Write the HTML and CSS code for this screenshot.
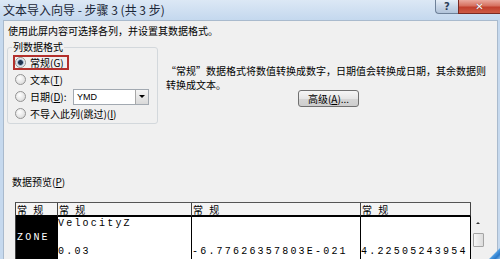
FILE: index.html
```html
<!DOCTYPE html>
<html lang="zh-CN">
<head>
<meta charset="utf-8">
<title>文本导入向导 - 步骤 3 (共 3 步)</title>
<link rel="stylesheet" href="styles.css">
</head>
<body>
<div class="window">
  <div class="titlebar">
    <span class="title">文本导入向导 - 步骤 3 (共 3 步)</span>
    <div class="caption">
      <span class="btn-help">?</span>
      <span class="btn-close">✕</span>
    </div>
  </div>
  <div class="frame">
    <div class="panel">
      <p class="intro">使用此屏内容可选择各列，并设置其数据格式。</p>
      <div class="format-row">
        <fieldset class="group">
          <legend>列数据格式</legend>
          <div class="opt"><span class="hl"><span class="radio on"></span>常规(<u>G</u>)</span></div>
          <div class="opt"><span class="radio"></span>文本(<u>T</u>)</div>
          <div class="opt"><span class="radio"></span><span class="lbl-date">日期(<u>D</u>):</span>
            <div class="combo"><span class="combo-val">YMD</span><span class="drop"></span></div>
          </div>
          <div class="opt"><span class="radio"></span>不导入此列(跳过)(<u>I</u>)</div>
        </fieldset>
        <div class="desc">
          <p class="desc-text">“常规”数据格式将数值转换成数字，日期值会转换成日期，其余数据则<br>转换成文本。</p>
          <div class="adv">高级(<u>A</u>)...</div>
        </div>
      </div>
      <p class="pv-label">数据预览(<u>P</u>)</p>
      <div class="pv">
        <div class="tbl">
          <div class="th">常 规</div>
          <div class="th">常 规</div>
          <div class="th">常 规</div>
          <div class="th">常 规</div>
          <div class="td dark"><span class="ln"></span><span class="ln">ZONE</span><span class="ln"></span></div>
          <div class="td"><span class="ln">VelocityZ</span><span class="ln"></span><span class="ln">0.03</span></div>
          <div class="td"><span class="ln"></span><span class="ln"></span><span class="ln">-6.77626357803E-021</span></div>
          <div class="td"><span class="ln"></span><span class="ln"></span><span class="ln">4.22505243954</span></div>
        </div>
        <div class="scroll">
          <span class="up"></span>
          <span class="thumb"></span>
        </div>
      </div>
    </div>
  </div>
</div>
<div class="corner"></div>
</body>
</html>
```
FILE: styles.css
```css
* { box-sizing: border-box; }
html, body { margin: 0; padding: 0; }
body {
  width: 500px;
  height: 259px;
  overflow: hidden;
  position: relative;
  background: #c6d9ee;
  font-family: "Noto Sans CJK SC", "Noto Sans", sans-serif;
  font-size: 10px;
  color: #000;
}
p { margin: 0; }
u { text-decoration: underline; }

.window { display: flex; flex-direction: column; height: 259px; }

.titlebar {
  height: 20px;
  flex: none;
  display: flex;
  justify-content: space-between;
  align-items: flex-start;
  background: linear-gradient(#dce8f5, #c4d8ee);
}
.title { font-size: 12px; line-height: 20px; padding-left: 3px; color: #1b2636; }
.caption { display: flex; }
.btn-help {
  width: 23px; height: 14px;
  border: 1px solid #6e8199; border-top: none; border-right: none;
  border-radius: 0 0 0 4px;
  background: linear-gradient(#e6eef7, #c8d6e7 50%, #b2c4da);
  font: bold 10px/13px "DejaVu Sans", sans-serif;
  text-align: center; color: #2b3e58;
}
.btn-close {
  width: 42px; height: 14px;
  border: 1px solid #7a2a22; border-top: none; border-right: none;
  background: linear-gradient(#eaa99e, #d6705f 45%, #c13f2d 55%, #cd5a44);
  color: #fff; text-align: center;
  font: bold 10px/13px "DejaVu Sans", sans-serif;
  text-shadow: 0 0 1px #5a1a12;
}

.frame { flex: 1; display: flex; padding: 0 2px 0 3px; min-height: 0; }
.panel {
  flex: 1;
  background: #f0f0f0;
  border: 1px solid #a9bacd;
  border-bottom: none;
  overflow: hidden;
}

.intro { margin: 3px 0 0 4px; line-height: 14px; }

.format-row { display: flex; align-items: flex-start; margin-top: 3px; }
.group {
  margin: 0 0 0 3px;
  padding: 1px 0 1px 7px;
  width: 151px;
  border: 1px solid #d3d8dc;
  border-radius: 3px;
  min-width: 0;
}
.group legend { padding: 0 1px; margin-left: -3px; line-height: 12px; font-size: 10px; }
.opt { display: flex; align-items: center; height: 17px; white-space: nowrap; }
.hl { display: inline-flex; align-items: center; height: 11px; padding-right: 3px; outline: 2px solid #b3302c; }
.radio {
  width: 11px; height: 11px; flex: none;
  border-radius: 50%;
  border: 1px solid #939393;
  background: radial-gradient(circle at 40% 35%, #ffffff, #dedede 75%);
  margin-right: 4px;
}
.radio.on { background: radial-gradient(circle, #20324d 0 2px, #7f9ab8 2.6px, #dde5ee 3.6px, #f4f4f4 4.5px); }
.lbl-date { width: 43px; flex: none; }
.combo {
  width: 76px; height: 16px;
  border: 1px solid #a2a9b1;
  background: #fff;
  display: flex; align-items: center;
  padding-left: 3px;
}
.combo-val { font: 9px "Liberation Sans", sans-serif; }
.drop {
  margin-left: auto; width: 13px; height: 14px;
  border-left: 1px solid #a8a8a8;
  background: linear-gradient(#f5f5f5, #d9d9d9);
  display: flex; align-items: center; justify-content: center;
}
.drop::after {
  content: ""; width: 0; height: 0;
  border-left: 3px solid transparent; border-right: 3px solid transparent;
  border-top: 3px solid #000;
}

.desc { margin-left: 8px; padding-top: 23px; }
.desc-text { line-height: 14px; white-space: nowrap; }
.adv {
  margin: -2px 0 0 132px;
  width: 61px; height: 17px;
  border: 1px solid #707070; border-radius: 3px;
  background: linear-gradient(#f6f6f6, #e6e6e6 50%, #d6d6d6 51%, #cdcdcd);
  line-height: 15px; text-align: center;
}

.pv-label { margin: 51px 0 0 8px; line-height: 14px; }

.pv { display: flex; align-items: flex-start; margin: 13px 0 0 11px; }
.tbl {
  display: grid;
  grid-template-columns: 42px 134px 169px 110px;
  border-left: 1px solid #444;
  border-top: 1px solid #555;
  background: #fff;
}
.th {
  height: 14px;
  border-right: 1px solid #444;
  border-bottom: 2px solid #000;
  background: #f4f4f4;
  padding-left: 1px;
  line-height: 13px;
  letter-spacing: 2px;
  white-space: pre;
}
.td {
  height: 45px;
  border-right: 1px solid #000;
  display: flex; flex-direction: column;
  font: 10px "Liberation Mono", monospace;
  letter-spacing: 2.2px;
}
.td.dark { background: #000; color: #fff; padding-left: 1px; }
.ln { height: 14px; line-height: 14px; white-space: pre; }

.scroll { width: 12px; margin-left: 1px; padding-top: 17px; display: flex; flex-direction: column; align-items: center; }
.up {
  width: 0; height: 0; margin: 3px 0 9px;
  border-left: 2px solid transparent; border-right: 2px solid transparent;
  border-bottom: 2px solid #333;
}
.thumb {
  width: 11px; height: 14px;
  border: 1px solid #a4a4a4; border-radius: 1px;
  background: linear-gradient(90deg, #f6f6f6, #dcdcdc);
}

.corner {
  position: absolute; right: 0; bottom: 0;
  width: 12px; height: 14px;
  background: linear-gradient(135deg, transparent 55%, #4a9ae0 62%, #2a78c8 80%, #8cc3f0);
}
```
